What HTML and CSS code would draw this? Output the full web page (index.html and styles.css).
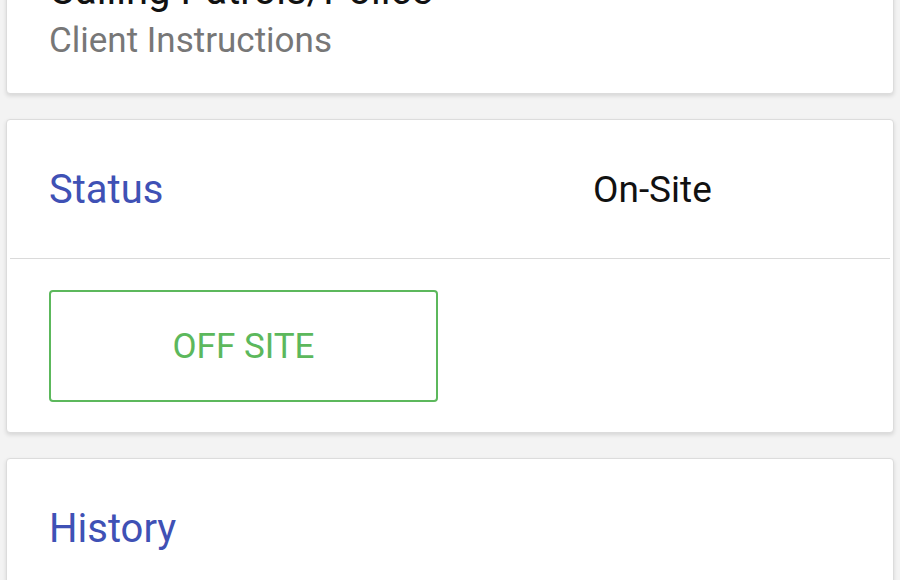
FILE: index.html
```html
<!DOCTYPE html>
<html>
<head>
    <meta charset="utf-8">
    <link rel="stylesheet" href="styles.css">
</head>
<body>
    <div class="page">
        <div class="card info-card">
            <div class="info-title">Calling Patrols/Police</div>
            <div class="info-sub">Client Instructions</div>
        </div>

        <div class="card">
            <div class="card-row">
                <div class="card-label">Status</div>
                <div class="card-value">On-Site</div>
            </div>
            <div class="divider"></div>
            <div class="card-body">
                <button class="outline-btn">OFF SITE</button>
            </div>
        </div>

        <div class="card">
            <div class="card-row history-row">
                <div class="card-label">History</div>
            </div>
        </div>
    </div>
</body>
</html>
```

FILE: styles.css
```css
:root {
    --page-bg: #f3f3f3;
    --card-bg: #ffffff;
    --card-border: #dcdcdc;
    --indigo: #3f51b5;
    --green: #5cb85c;
    --muted: #777777;
}

body {
    margin: 0;
    background-color: var(--page-bg);
    font-family: Roboto, "Noto Sans", sans-serif;
    overflow: hidden;
}

.page {
    display: flex;
    flex-direction: column;
    gap: 25px;
    padding: 0 6px;
    margin-top: -52px;
}

.card {
    background-color: var(--card-bg);
    border: 1px solid var(--card-border);
    border-radius: 4px;
    box-shadow: 0 2px 4px rgba(0, 0, 0, 0.12);
}

.info-card {
    padding: 20px 42px 30px;
}

.info-title {
    font-size: 40px;
    line-height: 44px;
    color: #111;
}

.info-sub {
    font-size: 35px;
    line-height: 44px;
    color: var(--muted);
    margin-top: 6px;
}

.card-row {
    display: grid;
    grid-template-columns: 544px 1fr;
    align-items: center;
    height: 138px;
    padding-left: 42px;
}

.card-label {
    color: var(--indigo);
    font-size: 40px;
}

.card-value {
    color: #111;
    font-size: 37px;
}

.divider {
    height: 1px;
    background-color: #dadada;
    margin: 0 3px;
}

.card-body {
    padding: 31px 42px 30px;
}

.outline-btn {
    display: block;
    width: 389px;
    height: 112px;
    background: none;
    border: 2px solid var(--green);
    border-radius: 4px;
    color: var(--green);
    font-family: Roboto, "Noto Sans", sans-serif;
    font-size: 35px;
}
```
